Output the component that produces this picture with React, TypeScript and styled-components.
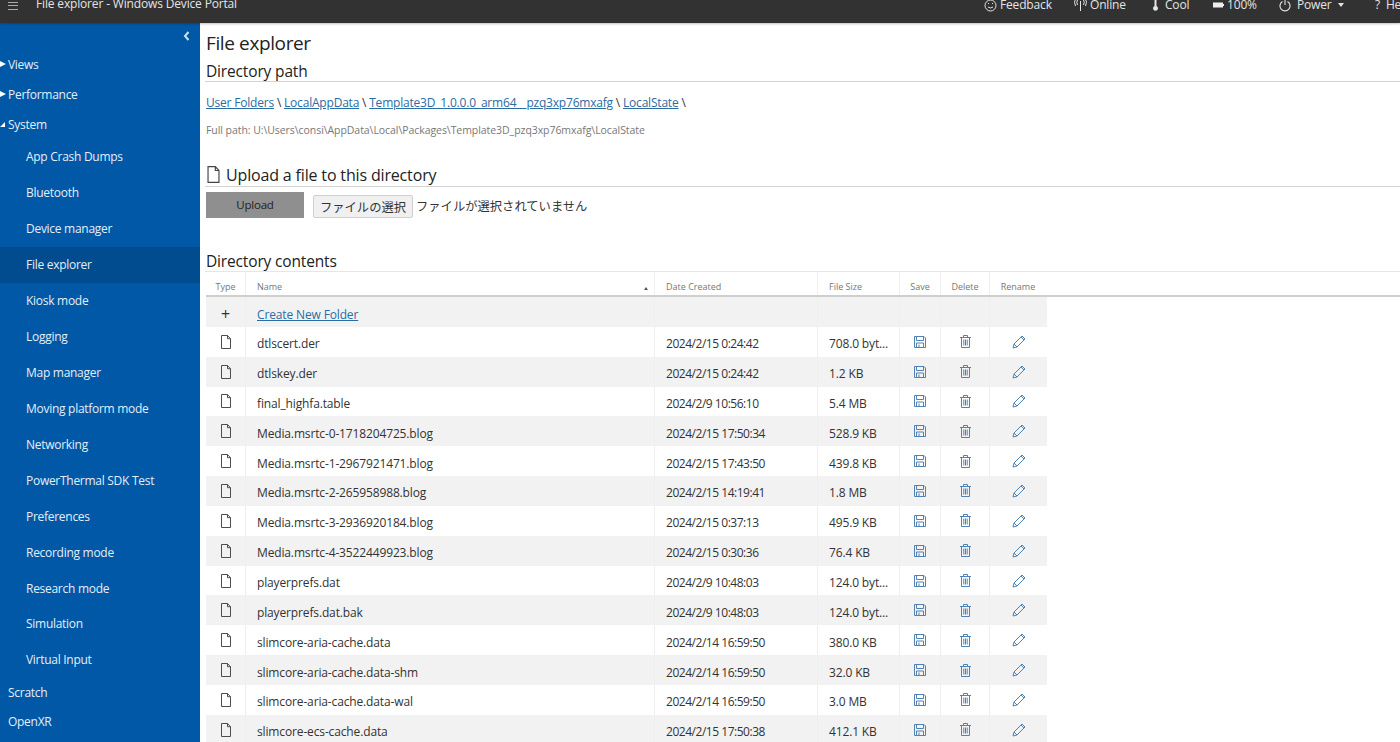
import React from "react";
import styled, { createGlobalStyle } from "styled-components";

const Global = createGlobalStyle`
  html, body { margin: 0; padding: 0; height: 100%; overflow: hidden; background: #fff; }
  body { font-family: "Open Sans", "Noto Sans CJK JP", sans-serif; color: #333; }
  #root { height: 742px; overflow: hidden; }
`;

const Page = styled.div`width: 1400px; height: 742px; display: flex; flex-direction: column; overflow: hidden;`;
const TopBar = styled.header`
  flex: 0 0 23px; height: 23px; background: #323232; color: #e4e4e4; display: flex; align-items: flex-start;
  box-shadow: 0 1px 2px rgba(0,0,0,.25); position: relative; z-index: 2; font-size: 12px; overflow: hidden;
`;
const Burger = styled.span`width: 10px; height: 6px; margin: 2px 0 0 8px; border-top: 1px solid #aaa; border-bottom: 1px solid #aaa; position: relative;
  &::after { content: ""; position: absolute; left: 0; right: 0; top: 2px; border-top: 1px solid #aaa; }`;
const AppTitle = styled.span`margin: -4px 0 0 18px; line-height: 16px; letter-spacing: -.16px;`;
const StatusList = styled.div`margin-left: auto; display: flex; align-items: flex-start; width: 416px; flex: 0 0 416px; margin-top: -3px; line-height: 16px;`;
const StatusItem = styled.span<{ $w: number; $gap?: number }>`flex: 0 0 ${p => p.$w}px; display: flex; align-items: center; gap: ${p => p.$gap ?? 3}px; white-space: nowrap; letter-spacing: -.16px;`;
const Body = styled.div`flex: 1; display: flex; min-height: 0;`;
const Side = styled.nav`flex: 0 0 200px; background: #0058a6; color: #e4eef8; font-size: 12px; letter-spacing: -.28px; display: flex; flex-direction: column; position: relative;`;
const Collapse = styled.span`height: 26px; display: flex; justify-content: flex-end; align-items: flex-start; padding: 8px 10px 0 0; box-sizing: border-box;`;
const Group = styled.div<{ $h?: number }>`height: ${p => p.$h ?? 30}px; display: flex; align-items: center;`;
const Arrow = styled.span<{ $open?: boolean }>`width: 8px; height: 8px; flex: 0 0 8px; display: flex; align-items: center; justify-content: flex-start;
  &::before { content: ""; ${p => p.$open
    ? "border-left: 5px solid transparent; border-bottom: 5px solid #fff;"
    : "border-left: 6px solid #fff; border-top: 3.5px solid transparent; border-bottom: 3.5px solid transparent;"} }`;
const PlainGroup = styled(Group)`padding-left: 8px;`;
const SideItem = styled.div<{ $active?: boolean }>`height: 35.93px; display: flex; align-items: center; padding-left: 26px; background: ${p => p.$active ? "#004c8f" : "transparent"};`;
const Main = styled.main`flex: 1; min-width: 0; padding: 8px 0 0 6px; overflow: hidden;`;
const H1 = styled.h1`margin: 0; font-size: 19px; font-weight: 400; line-height: 24px; color: #222; letter-spacing: -.02em;`;
const H2 = styled.h2<{ $top?: number; $line?: string; $size?: number; $h?: number }>`margin: ${p => p.$top ?? 0}px 0 0 -1px; padding: 1px 0 ${p => (p.$h ?? 23) - 23}px 1px; box-sizing: border-box; font-size: ${p => p.$size ?? 15.5}px; font-weight: 400; line-height: 22px; height: ${p => p.$h ?? 23}px; color: #222; border-bottom: 1px solid ${p => p.$line ?? "#d2d2d2"}; display: flex; align-items: center; gap: 5px; letter-spacing: -.01em;`;
const Crumbs = styled.div`margin-top: 12px; font-size: 12px; line-height: 18px; letter-spacing: -.2px; color: #333;`;
const Link = styled.a`color: #2b6ca3; text-decoration: underline;`;
const FullPath = styled.div`margin-top: 11px; font-size: 10.5px; line-height: 14px; color: #777; letter-spacing: -.06px;`;
const UploadRow = styled.div`display: flex; align-items: flex-end; margin-top: 5px; height: 26px;`;
const UploadBtn = styled.div`width: 98px; height: 26px; padding-bottom: 1px; box-sizing: border-box; background: #8f8f8f; color: #222; font-size: 11.5px; display: flex; align-items: center; justify-content: center; letter-spacing: -.02em;`;
const FileBtn = styled.div`margin-left: 9px; width: 100px; height: 23px; box-sizing: border-box; background: #f0f0f0; border: 1px solid #cfcfcf; border-radius: 2px; font-size: 12.3px; color: #333; display: flex; align-items: center; justify-content: center; font-family: "Noto Sans CJK JP", sans-serif;`;
const FileText = styled.span`margin-left: 3px; font-size: 12.3px; color: #333; line-height: 23px; font-family: "Noto Sans CJK JP", sans-serif;`;
const Table = styled.div`font-size: 12px; letter-spacing: -.14px; color: #333;`;
const cols = "40px 409px 163px 82px 41px 49px 57px";
const HeadRow = styled.div`display: grid; grid-template-columns: ${cols} 1fr; border-bottom: 2px solid #cfcfcf; height: 23px; color: #777; font-size: 9px; letter-spacing: 0;`;
const HeadCell = styled.div<{ $center?: boolean; $last?: boolean }>`display: flex; align-items: center; padding: 5px 0 0 ${p => p.$center ? 0 : 11}px; box-sizing: border-box; justify-content: ${p => p.$center ? "center" : "flex-start"}; border-right: 1px solid ${p => p.$last ? "transparent" : "#eee"}; position: relative;`;
const SortMark = styled.span`position: absolute; right: 6px; top: 15px; border-left: 2px solid transparent; border-right: 2px solid transparent; border-bottom: 3px solid #555;`;
const Row = styled.div<{ $alt?: boolean }>`display: grid; grid-template-columns: ${cols}; width: 841px; height: 29.85px; background: ${p => p.$alt ? "#f2f2f2" : "#fff"};`;
const Cell = styled.div<{ $center?: boolean; $last?: boolean }>`display: flex; align-items: center; white-space: nowrap; overflow: hidden; padding-left: ${p => p.$center ? 0 : 11}px; justify-content: ${p => p.$center ? "center" : "flex-start"}; border-right: 1px solid ${p => p.$last ? "transparent" : "#efefef"}; padding-top: ${p => p.$center ? 0 : 4}px; box-sizing: border-box;`;
const DateCell = styled(Cell)`letter-spacing: -.47px;`;
const CreateCell = styled(Cell)`padding-top: 5px;`;
const PlusCell = styled(Cell)`padding: 4px 0 0;`;
const Plus = styled.span`font-size: 16px; line-height: 1; color: #333;`;
const PencilSlot = styled.span`display: flex; margin-left: 2px;`;

const DocIcon = ({ size = 12, h = 14 }: { size?: number; h?: number }) => (
  <svg width={size} height={h} viewBox="0 0 12 14" fill="none" stroke="#444" strokeWidth=".95"><path d="M1.500 .5h6l3 3.200v9.800h-9zM7.500 .5v3.200h3" /></svg>
);
const SaveIcon = () => (
  <svg width="12" height="12" viewBox="0 0 12 12" fill="none" stroke="#5082b3" strokeWidth="1"><path d="M.5 .5h9.500l1.500 1.500v9.500H.5zM2.500 .5v4h7v-4M2.500 11.500v-4.500h7v4.500M5 8.500v3" /></svg>
);
const TrashIcon = () => (
  <svg width="11" height="13" viewBox="0 0 11 13" fill="none" stroke="#5082b3" strokeWidth="1"><path d="M0 2.500h11M3.500 2.500v-2h4v2M1.500 2.500v10h8v-10M3.800 4.500v6M5.500 4.500v6M7.200 4.500v6" /></svg>
);
const PencilIcon = () => (
  <svg width="14" height="14" viewBox="0 0 14 14" fill="none" stroke="#5082b3" strokeWidth="1"><path d="M1 13l1-4L10 1l3 3-8 8zM2 9l3 3M9 2l3 3" /></svg>
);
const Sm = () => (<svg width="13" height="13" viewBox="0 0 13 13" fill="none" stroke="#e4e4e4"><circle cx="6.500" cy="6.500" r="5.500" /><path d="M4 8q2.500 2 5 0M4.500 4v1M8.500 4v1" /></svg>);
const Ant = () => (<svg width="13" height="12" viewBox="0 0 13 12" fill="none" stroke="#e4e4e4"><path d="M6.500 2v10M3.500 1q-1.500 2 0 5M9.500 1q1.500 2 0 5M1.500 0q-2 3 0 7M11.500 0q2 3 0 7" /></svg>);
const Therm = () => (<svg width="7" height="12" viewBox="0 0 7 12"><path d="M2.500 0h2v7a2.500 2.500 0 1 1-2 0z" fill="#e4e4e4" /></svg>);
const Batt = () => (<svg width="11" height="6" viewBox="0 0 11 6"><rect width="10" height="5" y=".5" fill="#eee" /><rect x="10" y="2" width="1" height="2" fill="#eee" /></svg>);
const Pow = () => (<svg width="12" height="13" viewBox="0 0 12 13" fill="none" stroke="#e4e4e4" strokeWidth="1.100"><path d="M3.500 2.500a5 5 0 1 0 5 0M6 0v6" /></svg>);
const Caret = styled.span`margin-left: 3px; border-left: 3px solid transparent; border-right: 3px solid transparent; border-top: 4px solid #e4e4e4;`;

const files: [string, string, string][] = [
  ["dtlscert.der", "2024/2/15 0:24:42", "708.0 byt..."],
  ["dtlskey.der", "2024/2/15 0:24:42", "1.2 KB"],
  ["final_highfa.table", "2024/2/9 10:56:10", "5.4 MB"],
  ["Media.msrtc-0-1718204725.blog", "2024/2/15 17:50:34", "528.9 KB"],
  ["Media.msrtc-1-2967921471.blog", "2024/2/15 17:43:50", "439.8 KB"],
  ["Media.msrtc-2-265958988.blog", "2024/2/15 14:19:41", "1.8 MB"],
  ["Media.msrtc-3-2936920184.blog", "2024/2/15 0:37:13", "495.9 KB"],
  ["Media.msrtc-4-3522449923.blog", "2024/2/15 0:30:36", "76.4 KB"],
  ["playerprefs.dat", "2024/2/9 10:48:03", "124.0 byt..."],
  ["playerprefs.dat.bak", "2024/2/9 10:48:03", "124.0 byt..."],
  ["slimcore-aria-cache.data", "2024/2/14 16:59:50", "380.0 KB"],
  ["slimcore-aria-cache.data-shm", "2024/2/14 16:59:50", "32.0 KB"],
  ["slimcore-aria-cache.data-wal", "2024/2/14 16:59:50", "3.0 MB"],
  ["slimcore-ecs-cache.data", "2024/2/15 17:50:38", "412.1 KB"],
];
const sysItems = ["App Crash Dumps", "Bluetooth", "Device manager", "File explorer", "Kiosk mode", "Logging", "Map manager", "Moving platform mode", "Networking", "PowerThermal SDK Test", "Preferences", "Recording mode", "Research mode", "Simulation", "Virtual Input"];

export default function App() {
  return (
    <Page>
      <Global />
      <TopBar>
        <Burger />
        <AppTitle>File explorer - Windows Device Portal</AppTitle>
        <StatusList>
          <StatusItem $w={90}><Sm />Feedback</StatusItem>
          <StatusItem $w={78}><Ant />Online</StatusItem>
          <StatusItem $w={61}><Therm />&nbsp;Cool</StatusItem>
          <StatusItem $w={66}><Batt />100%</StatusItem>
          <StatusItem $w={93}><Pow />&nbsp;Power<Caret /></StatusItem>
          <StatusItem $w={30}>&nbsp;?&nbsp;&nbsp;Help</StatusItem>
        </StatusList>
      </TopBar>
      <Body>
        <Side>
          <Collapse>
            <svg width="7" height="10" viewBox="0 0 7 10" fill="none" stroke="#cfe0f0" strokeWidth="2"><path d="M5.500 1L2 5l3.500 4" /></svg>
          </Collapse>
          <Group><Arrow />Views</Group>
          <Group><Arrow />Performance</Group>
          <Group><Arrow $open />System</Group>
          {sysItems.map(s => <SideItem key={s} $active={s === "File explorer"}>{s}</SideItem>)}
          <PlainGroup $h={29}>Scratch</PlainGroup>
          <PlainGroup $h={30}>OpenXR</PlainGroup>
        </Side>
        <Main>
          <H1>File explorer</H1>
          <H2 $top={4}>Directory path</H2>
          <Crumbs><Link>User Folders</Link> \ <Link>LocalAppData</Link> \ <Link>Template3D_1.0.0.0_arm64__pzq3xp76mxafg</Link> \ <Link>LocalState</Link> \</Crumbs>
          <FullPath>Full path: U:\Users\consi\AppData\Local\Packages\Template3D_pzq3xp76mxafg\LocalState</FullPath>
          <H2 $top={26} $size={16} $h={24}><DocIcon size={15} h={17} />Upload a file to this directory</H2>
          <UploadRow>
            <UploadBtn>Upload</UploadBtn>
            <FileBtn>ファイルの選択</FileBtn>
            <FileText>ファイルが選択されていません</FileText>
          </UploadRow>
          <H2 $top={31} $line="#e6e6e6">Directory contents</H2>
          <Table>
            <HeadRow>
              <HeadCell $center>Type</HeadCell>
              <HeadCell>Name<SortMark /></HeadCell>
              <HeadCell>Date Created</HeadCell>
              <HeadCell>File Size</HeadCell>
              <HeadCell $center>Save</HeadCell>
              <HeadCell $center>Delete</HeadCell>
              <HeadCell $center $last>Rename</HeadCell>
              <span />
            </HeadRow>
            <Row $alt>
              <PlusCell $center><Plus>+</Plus></PlusCell>
              <CreateCell><Link>Create New Folder</Link></CreateCell>
              <Cell /><Cell /><Cell /><Cell /><Cell $last />
            </Row>
            {files.map((f, i) => (
              <Row key={f[0]} $alt={i % 2 === 1}>
                <Cell $center><DocIcon /></Cell>
                <Cell>{f[0]}</Cell>
                <DateCell>{f[1]}</DateCell>
                <Cell>{f[2]}</Cell>
                <Cell $center><SaveIcon /></Cell>
                <Cell $center><TrashIcon /></Cell>
                <Cell $center $last><PencilSlot><PencilIcon /></PencilSlot></Cell>
              </Row>
            ))}
          </Table>
        </Main>
      </Body>
    </Page>
  );
}
